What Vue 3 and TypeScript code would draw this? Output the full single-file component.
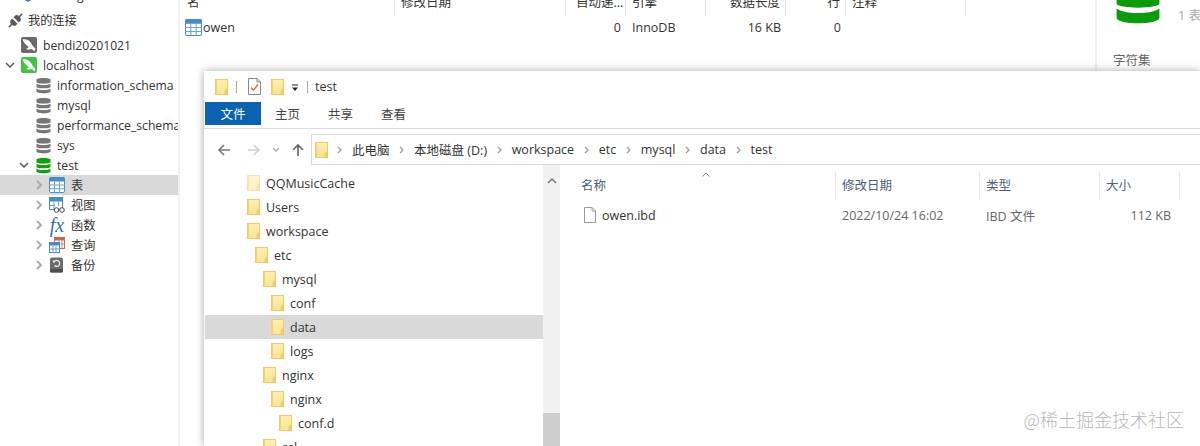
<script setup lang="ts">
interface TreeRow { name: string; depth: number; faded?: boolean; selected?: boolean }
interface Crumb { label: string }

const columns = [
  { label: '名', value: 'owen', cls: 'first' },
  { label: '修改日期', value: '', cls: '' },
  { label: '自动递...', value: '0', cls: 'num-value' },
  { label: '引擎', value: 'InnoDB', cls: '' },
  { label: '数据长度', value: '16 KB', cls: 'num' },
  { label: '行', value: '0', cls: 'num' },
  { label: '注释', value: '', cls: '' }
]

const schemas = ['information_schema', 'mysql', 'performance_schema', 'sys']

const objects = [
  { name: '表', icon: 'table', selected: true },
  { name: '视图', icon: 'view', selected: false },
  { name: '函数', icon: 'fx', selected: false },
  { name: '查询', icon: 'query', selected: false },
  { name: '备份', icon: 'backup', selected: false }
]

const crumbs: Crumb[] = [
  { label: '此电脑' }, { label: '本地磁盘 (D:)' }, { label: 'workspace' },
  { label: 'etc' }, { label: 'mysql' }, { label: 'data' }, { label: 'test' }
]

const tabs = ['主页', '共享', '查看']

const tree: TreeRow[] = [
  { name: 'QQMusicCache', depth: 0, faded: true },
  { name: 'Users', depth: 0 },
  { name: 'workspace', depth: 0 },
  { name: 'etc', depth: 1 },
  { name: 'mysql', depth: 2 },
  { name: 'conf', depth: 3 },
  { name: 'data', depth: 3, selected: true },
  { name: 'logs', depth: 3 },
  { name: 'nginx', depth: 2 },
  { name: 'nginx', depth: 3 },
  { name: 'conf.d', depth: 4 },
  { name: 'ssl', depth: 2 }
]
</script>

<template>
  <div class="app">
    <svg class="defs" width="0" height="0" aria-hidden="true">
      <defs>
        <linearGradient id="fg" x1="0" y1="0" x2="0" y2="1">
          <stop offset="0" stop-color="#ffefb5" />
          <stop offset="1" stop-color="#fde28e" />
        </linearGradient>
        <symbol id="folder" viewBox="0 0 13 16">
          <rect x="0.5" y="0.5" width="12" height="15" fill="url(#fg)" stroke="#eccb72" />
          <rect x="0.5" y="0.5" width="1.4" height="15" fill="#f3cf70" />
          <path d="M10 15.5V11.5L12.5 9.5V15.5Z" fill="#f5d27a" stroke="#e5bf5e" stroke-width="0.7" />
        </symbol>
        <symbol id="db" viewBox="0 0 15 17">
          <path d="M0.5 2.6C0.5 0.4 14.5 0.4 14.5 2.6V5C14.5 7.2 0.5 7.2 0.5 5Z" fill="currentColor" />
          <path d="M0.5 6.6C3 8.6 12 8.6 14.5 6.6V10C14.5 11.8 0.5 11.8 0.5 10Z" fill="currentColor" />
          <path d="M0.5 11.6C3 13.6 12 13.6 14.5 11.6V14.6C14.5 17 0.5 17 0.5 14.6Z" fill="currentColor" />
        </symbol>
        <symbol id="grid" viewBox="0 0 16 16">
          <rect x="0.5" y="0.5" width="15" height="15" rx="1.2" fill="#fff" stroke="#4a8cc2" />
          <rect x="0.5" y="0.5" width="15" height="4" fill="#4a8cc2" />
          <path d="M5.5 4.5V15.5M10.5 4.5V15.5M0.5 8H15.5M0.5 11.7H15.5" stroke="#6ea4d0" stroke-width="1" fill="none" />
        </symbol>
        <symbol id="dolphin" viewBox="0 0 16 16">
          <path d="M1.500 2.500C5 1.500 8.500 3.500 10 6C11 8 12.500 10 14.500 11.500L13.500 14.500C12.500 13 11 12.300 9.800 12C8.300 13.200 6.300 12.800 5 11.500C6.800 11.500 7.500 10.800 7.500 9.800C5.500 8.500 3 6 1.500 2.500Z" fill="#fff" />
        </symbol>
      </defs>
    </svg>

    <aside class="sidebar">
      <div class="nav-row cropped-row">
        <svg class="hex" viewBox="0 0 16 16" width="16" height="16"><path d="M8 1L15 5V11L8 15L1 11V5Z" fill="#3b7fc4" /></svg>
        <span>Not signed in</span>
      </div>
      <div class="nav-row spaced plug-row">
        <svg class="plug" viewBox="0 0 16 16" width="15" height="15">
          <g transform="rotate(45 8 8)" fill="#5a5a5a">
            <rect x="7.200" y="-2" width="1.600" height="5" />
            <rect x="7.200" y="13" width="1.600" height="5" />
            <path d="M4 7V5.200A4 3.200 0 0 1 12 5.200V7Z" />
            <path d="M4 9V10.800A4 3.200 0 0 0 12 10.800V9Z" />
          </g>
        </svg>
        <span>我的连接</span>
      </div>
      <div class="nav-row spaced conn-row">
        <span class="conn gray"><svg width="16" height="16"><use href="#dolphin" /></svg></span>
        <span>bendi20201021</span>
      </div>
      <div class="nav-row conn-row open-row">
        <svg class="chev" viewBox="0 0 10 10" width="10" height="10"><path d="M1 3L5 7L9 3" stroke="#555" stroke-width="1.500" fill="none" /></svg>
        <span class="conn green"><svg width="16" height="16"><use href="#dolphin" /></svg></span>
        <span>localhost</span>
      </div>
      <div v-for="s in schemas" :key="s" class="nav-row schema-row">
        <svg class="db" width="15" height="17"><use href="#db" /></svg>
        <span class="clip">{{ s }}</span>
      </div>
      <div class="nav-row schema-row active-db">
        <svg class="chev" viewBox="0 0 10 10" width="10" height="10"><path d="M1 3L5 7L9 3" stroke="#555" stroke-width="1.500" fill="none" /></svg>
        <svg class="db on" width="15" height="17"><use href="#db" /></svg>
        <span>test</span>
      </div>
      <div v-for="o in objects" :key="o.name" class="nav-row object-row" :class="{ selected: o.selected }">
        <svg class="chev-right" viewBox="0 0 8 10" width="8" height="10"><path d="M2 1L6 5L2 9" stroke="#a8a8a8" stroke-width="1.800" fill="none" /></svg>
        <span class="obj-icon">
          <svg v-if="o.icon === 'table'" width="16" height="16"><use href="#grid" /></svg>
          <svg v-else-if="o.icon === 'view'" viewBox="0 0 16 16" width="16" height="16">
            <rect x="0.500" y="0.500" width="13" height="12" fill="#fff" stroke="#4a8cc2" />
            <rect x="0.500" y="0.500" width="13" height="4" fill="#4a8cc2" />
            <path d="M5 4.500V12.500M9.500 4.500V9M0.500 8.500H6" stroke="#6ea4d0" fill="none" />
            <circle cx="7.500" cy="13" r="2.300" fill="#fff" stroke="#444" />
            <circle cx="13" cy="13" r="2.300" fill="#fff" stroke="#444" />
          </svg>
          <span v-else-if="o.icon === 'fx'" class="fx">fx</span>
          <svg v-else-if="o.icon === 'query'" viewBox="0 0 16 16" width="16" height="16">
            <rect x="5.500" y="0.500" width="10" height="11" fill="#fff" stroke="#c86a4a" />
            <rect x="5.500" y="0.500" width="10" height="3" fill="#c86a4a" />
            <path d="M10 3.500V11.500M13 3.500V11.500M5.500 7H15.500" stroke="#d98c70" fill="none" />
            <rect x="0.500" y="5.500" width="10" height="10" fill="#fff" stroke="#4a8cc2" />
            <rect x="0.500" y="5.500" width="10" height="3" fill="#4a8cc2" />
            <path d="M4 8.500V15.500M7 8.500V15.500M0.500 12H10.500" stroke="#6ea4d0" fill="none" />
          </svg>
          <svg v-else viewBox="0 0 16 16" width="16" height="16">
            <rect x="1" y="0.500" width="13" height="15" rx="2" fill="#6b6b6b" />
            <rect x="1" y="12" width="13" height="3.500" rx="1" fill="#4d4d4d" />
            <path d="M5 5A3 3 0 1 1 5.500 8.500" stroke="#eee" stroke-width="1.200" fill="none" />
            <path d="M3.500 3.500L6.500 3.500L5 6.500Z" fill="#eee" />
          </svg>
        </span>
        <span>{{ o.name }}</span>
      </div>
    </aside>

    <main class="content">
      <div class="table-head">
        <div v-for="c in columns" :key="c.label" class="th" :class="c.cls">{{ c.label }}</div>
      </div>
      <div class="table-row">
        <div v-for="c in columns" :key="c.label" class="td" :class="c.cls">
          <svg v-if="c.cls === 'first'" width="17" height="17"><use href="#grid" /></svg>
          <span>{{ c.value }}</span>
        </div>
      </div>
    </main>

    <aside class="info">
      <div class="info-top">
        <svg class="info-db" viewBox="0 0 15 17" width="46" height="52"><use href="#db" /></svg>
        <span class="info-count">1 表</span>
      </div>
      <div class="info-label">字符集</div>
    </aside>

    <section class="explorer">
      <div class="titlebar">
        <svg class="f" width="13" height="16"><use href="#folder" /></svg>
        <i class="vsep first-sep"></i>
        <svg class="props" viewBox="0 0 13 17" width="13" height="17">
          <path d="M0.500 0.500H9L12.500 4V16.500H0.500Z" fill="#fff" stroke="#888" />
          <path d="M9 0.500V4H12.500" fill="none" stroke="#888" />
          <path d="M3 9.500L5.500 12L10 6.500" stroke="#e2672a" stroke-width="1.300" fill="none" />
        </svg>
        <svg class="f second" width="13" height="16"><use href="#folder" /></svg>
        <svg class="qa" viewBox="0 0 8 8" width="8" height="8">
          <path d="M1 1H7" stroke="#222" /><path d="M1 3.500H7L4 7Z" fill="#222" />
        </svg>
        <i class="vsep last-sep"></i>
        <span class="title">test</span>
      </div>

      <div class="ribbon">
        <div class="tab file">文件</div>
        <div v-for="t in tabs" :key="t" class="tab">{{ t }}</div>
      </div>

      <div class="navbar">
        <svg class="nav-btn back" viewBox="0 0 14 14" width="14" height="14"><path d="M13 7H2M7 2L2 7L7 12" stroke="#777" stroke-width="1.600" fill="none" /></svg>
        <svg class="nav-btn fwd" viewBox="0 0 14 14" width="14" height="14"><path d="M1 7H12M7 2L12 7L7 12" stroke="#d2d2d2" stroke-width="1.600" fill="none" /></svg>
        <svg class="nav-btn down" viewBox="0 0 8 6" width="8" height="6"><path d="M1 1L4 4L7 1" stroke="#aaa" stroke-width="1.300" fill="none" /></svg>
        <svg class="nav-btn up" viewBox="0 0 14 14" width="14" height="14"><path d="M7 13V2M2 7L7 2L12 7" stroke="#666" stroke-width="1.600" fill="none" /></svg>
        <div class="address">
          <svg class="addr-folder" width="13" height="16"><use href="#folder" /></svg>
          <template v-for="c in crumbs" :key="c.label">
            <svg class="crumb-sep" viewBox="0 0 5 8" width="5" height="8"><path d="M1 1L4 4L1 7" stroke="#999" stroke-width="1.200" fill="none" /></svg>
            <span class="crumb">{{ c.label }}</span>
          </template>
        </div>
      </div>

      <div class="panes">
        <div class="tree">
          <div v-for="(r, i) in tree" :key="i" class="tree-row" :class="['d' + r.depth, { sel: r.selected, faded: r.faded }]">
            <svg width="13" height="16"><use href="#folder" /></svg>
            <span>{{ r.name }}</span>
          </div>
        </div>
        <div class="scrollbar">
          <svg class="scroll-up" viewBox="0 0 10 6" width="10" height="6"><path d="M1 5L5 1L9 5" stroke="#777" stroke-width="1.500" fill="none" /></svg>
          <div class="thumb"></div>
        </div>
        <div class="files">
          <svg class="sort" viewBox="0 0 8 5" width="8" height="5"><path d="M0.500 4.500L4 1L7.500 4.500" stroke="#888" fill="none" /></svg>
          <div class="files-head">
            <div class="fh">名称</div>
            <div class="fh">修改日期</div>
            <div class="fh">类型</div>
            <div class="fh">大小</div>
          </div>
          <div class="files-row">
            <div class="fc name">
              <svg viewBox="0 0 12 16" width="12" height="16">
                <path d="M0.500 0.500H8L11.500 4V15.500H0.500Z" fill="#fff" stroke="#9a9a9a" />
                <path d="M8 0.500V4H11.500" fill="none" stroke="#9a9a9a" />
              </svg>
              <span>owen.ibd</span>
            </div>
            <div class="fc muted">2022/10/24 16:02</div>
            <div class="fc muted">IBD 文件</div>
            <div class="fc muted size">112 KB</div>
          </div>
        </div>
      </div>
    </section>

    <div class="watermark">@稀土掘金技术社区</div>
  </div>
</template>

<style>
html, body { margin: 0; background: #fff; }
</style>

<style scoped>
.app {
  position: relative;
  display: flex;
  width: 1200px;
  height: 446px;
  overflow: hidden;
  background: #fff;
  color: #333;
  font-family: "Open Sans", "Noto Sans CJK SC", sans-serif;
  font-size: 12.5px;
}
.defs { position: absolute; }

/* sidebar */
.sidebar {
  box-sizing: border-box;
  flex: none;
  width: 180px;
  border-right: 2px solid #f1f1f1;
  overflow: hidden;
  font-size: 12.2px;
}
.nav-row {
  display: flex;
  align-items: center;
  height: 20px;
  white-space: nowrap;
}
.cropped-row { margin-top: -15px; padding-left: 20px; gap: 8px; }
.spaced { margin-top: 5px; }
.plug-row { padding-left: 8px; gap: 5px; }
.conn-row { padding-left: 21px; gap: 6px; }
.open-row { padding-left: 5px; }
.conn {
  display: flex;
  width: 16px;
  height: 16px;
  border-radius: 2px;
}
.conn.gray { background: #6a6a6a; }
.conn.green { background: #3fc43f; }
.schema-row { padding-left: 36px; gap: 6px; }
.db { color: #777; flex: none; }
.db.on { color: #12a012; }
.clip { overflow: hidden; width: 121px; }
.active-db { padding-left: 19px; }
.active-db .chev { margin-right: 1px; }
.active-db.schema-row { gap: 6px; }
.object-row { padding-left: 35px; }
.object-row.selected { background: #d9d9d9; }
.chev-right { flex: none; margin-right: 6px; }
.obj-icon {
  display: flex;
  justify-content: center;
  width: 16px;
  margin-right: 6px;
}
.fx {
  color: #2f77b0;
  font-family: "Liberation Serif", serif;
  font-style: italic;
  font-size: 20px;
  line-height: 16px;
}

/* main table */
.content { flex: none; width: 915px; }
.table-head, .table-row {
  display: grid;
  grid-template-columns: 215px 171px 60px 80px 80px 60px 120px;
}
.table-head { height: 16px; align-items: flex-start; }
.th {
  box-sizing: border-box;
  height: 20px;
  line-height: 14px;
  padding: 0 6px;
  margin-top: -4px;
  border-right: 1px solid #e3e3e3;
  overflow: hidden;
  white-space: nowrap;
}
.th:nth-child(3) { padding-left: 10px; padding-right: 0; }
.th.first { margin-top: 0; height: 16px; line-height: 6px; padding-left: 7px; }
.th.num { text-align: right; padding-right: 5px; }
.table-row { margin-top: 1px; height: 20px; align-items: center; }
.td { padding: 0 6px; white-space: nowrap; }
.td.first { display: flex; align-items: center; gap: 1px; padding-left: 5px; }
.td.num, .td.num-value { text-align: right; padding-right: 5px; }

/* right info */
.info {
  box-sizing: border-box;
  flex: none;
  width: 105px;
  border-left: 2px solid #eee;
  padding-left: 16px;
}
.info-top { display: flex; height: 50px; }
.info-db { color: #0d9a0d; margin: -27px 17px 0 2px; flex: none; }
.info-count { color: #aaa; margin-top: 5px; white-space: nowrap; }
.info-label { color: #666; }

/* explorer */
.explorer {
  position: absolute;
  left: 204px;
  top: 71px;
  right: 0;
  bottom: 0;
  display: flex;
  flex-direction: column;
  background: #fff;
  box-shadow: 0 0 8px rgba(0, 0, 0, 0.35);
}
.titlebar {
  display: flex;
  align-items: center;
  height: 31px;
  padding-left: 11px;
  flex: none;
}
.vsep { width: 1px; height: 12px; background: #a8a8a8; flex: none; }
.first-sep { margin: 0 11px 0 8px; }
.props { flex: none; }
.second { margin-left: 10px; }
.qa { margin: 2px 0 0 7px; }
.last-sep { margin: 0 7px 0 8px; }
.title { color: #333; }
.ribbon {
  display: flex;
  height: 26px;
  flex: none;
  border-bottom: 1px solid #dadada;
  align-items: flex-start;
  padding-left: 1px;
}
.tab {
  height: 23px;
  line-height: 25px;
  width: 53px;
  text-align: center;
  color: #444;
}
.tab.file {
  width: 56px;
  background: #0a62b0;
  color: #fff;
}
.navbar {
  box-sizing: border-box;
  display: flex;
  align-items: center;
  height: 36px;
  flex: none;
  padding: 5px 0 0 13px;
}
.nav-btn { flex: none; }
.back { margin-right: 16px; }
.fwd { margin-right: 11px; }
.down { margin-right: 11px; }
.up { margin-right: 6px; }
.address {
  display: flex;
  align-items: center;
  flex: none;
  box-sizing: border-box;
  width: 900px;
  height: 31px;
  border: 1px solid #d9d9d9;
  padding-left: 3px;
  color: #333;
}
.addr-folder { margin-right: 9px; flex: none; }
.crumb-sep { flex: none; margin-right: 10px; }
.crumb { margin-right: 9.6px; white-space: nowrap; }

.panes { display: flex; flex: 1; min-height: 0; }
.tree {
  flex: none;
  width: 339px;
  padding: 6px 0 0 1px;
  box-sizing: border-box;
  overflow: hidden;
}
.tree-row {
  display: flex;
  align-items: center;
  gap: 6px;
  height: 24px;
  color: #333;
}
.tree-row svg { flex: none; }
.tree-row.d0 { padding-left: 42px; }
.tree-row.d1 { padding-left: 50px; }
.tree-row.d2 { padding-left: 58px; }
.tree-row.d3 { padding-left: 66px; }
.tree-row.d4 { padding-left: 74px; }
.tree-row.sel { background: #d9d9d9; }
.tree-row.faded svg { opacity: 0.55; }
.scrollbar {
  position: relative;
  flex: none;
  width: 17px;
  background: #f1f1f1;
  display: flex;
  flex-direction: column;
  align-items: center;
}
.scroll-up { margin-top: 13px; }
.thumb { width: 100%; margin-top: auto; height: 33px; background: #cdcdcd; }
.files { position: relative; flex: 1; padding-left: 21px; }
.sort { position: absolute; left: 142px; top: 7px; }
.files-head, .files-row {
  display: grid;
  grid-template-columns: 255px 144px 120px 80px;
}
.files-head { height: 26px; margin-top: 7px; align-items: stretch; }
.fh {
  padding-left: 6px;
  line-height: 28px;
  color: #4c607a;
  border-right: 1px solid #e5e5e5;
}
.fh:first-child { padding-left: 0; }
.files-row { height: 24px; align-items: center; margin-top: 5px; }
.fc { padding-left: 6px; white-space: nowrap; }
.fc.name { display: flex; align-items: center; gap: 6px; padding-left: 3px; color: #333; }
.muted { color: #666; }
.fc.size { text-align: right; padding: 0 9px 0 0; }

.watermark {
  position: absolute;
  right: 16px;
  bottom: 15px;
  font-size: 18px;
  line-height: 24px;
  color: rgba(120, 120, 120, 0.55);
  white-space: nowrap;
  font-family: "Noto Sans CJK SC", sans-serif;
  font-weight: 300;
}
</style>
